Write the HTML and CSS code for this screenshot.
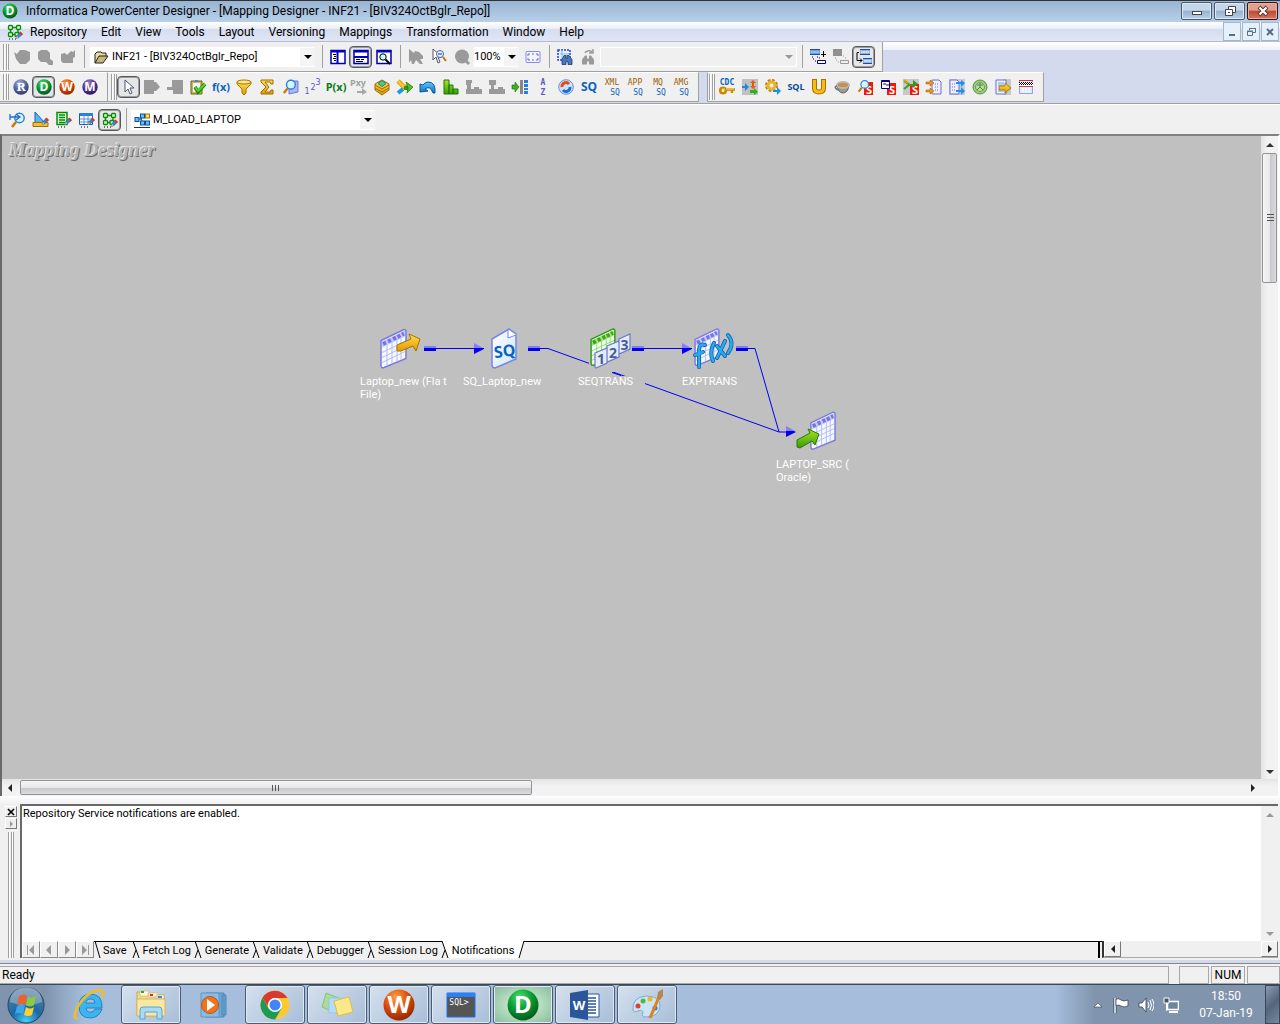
FILE: index.html
```html
<!DOCTYPE html>
<html lang="en">
<head>
<meta charset="utf-8">
<title>Informatica PowerCenter Designer</title>
<link rel="stylesheet" href="styles.css">
</head>
<body>
<svg class="defs" aria-hidden="true">
  <defs>
    <linearGradient id="gold" x1="0" y1="0" x2="0" y2="1"><stop offset="0" stop-color="#ffe14a"/><stop offset="1" stop-color="#e09a00"/></linearGradient>
    <linearGradient id="leaf" x1="0" y1="0" x2="0" y2="1"><stop offset="0" stop-color="#a6e81c"/><stop offset="1" stop-color="#3a9a08"/></linearGradient>
    <linearGradient id="sky" x1="0" y1="0" x2="0" y2="1"><stop offset="0" stop-color="#5cc8fa"/><stop offset="1" stop-color="#0a6fc4"/></linearGradient>
    <linearGradient id="paper" x1="0" y1="0" x2="1" y2="1"><stop offset="0" stop-color="#ffffff"/><stop offset="1" stop-color="#cfe6ff"/></linearGradient>
    <radialGradient id="ballR" cx=".4" cy=".25" r=".8"><stop offset="0" stop-color="#a4b0dc"/><stop offset=".6" stop-color="#4c5a94"/><stop offset="1" stop-color="#303c70"/></radialGradient>
    <radialGradient id="ballD" cx=".4" cy=".25" r=".8"><stop offset="0" stop-color="#4ade6a"/><stop offset=".5" stop-color="#0a9a34"/><stop offset="1" stop-color="#04521c"/></radialGradient>
    <radialGradient id="ballW" cx=".4" cy=".25" r=".8"><stop offset="0" stop-color="#ffa04a"/><stop offset=".5" stop-color="#dc4c08"/><stop offset="1" stop-color="#8a2400"/></radialGradient>
    <radialGradient id="ballM" cx=".4" cy=".25" r=".8"><stop offset="0" stop-color="#9a7cd0"/><stop offset=".6" stop-color="#4c2a8a"/><stop offset="1" stop-color="#2c1460"/></radialGradient>
    <radialGradient id="orb" cx=".5" cy=".95" r=".9"><stop offset="0" stop-color="#3fd2ff"/><stop offset=".45" stop-color="#1a6aa4"/><stop offset="1" stop-color="#5e7f9e"/></radialGradient>
    <symbol id="pencil" viewBox="0 0 8 8"><path d="M1 7l1-3 3-3 2 2-3 3z" fill="#2a8af0" stroke="#0a50b0" stroke-width=".6"/><path d="M4 1.500l1.500-1.500L8 2.500 6.500 4z" fill="#e83010"/><path d="M.5 7.500L2 4.500l1.500 1.500z" fill="#f8c040"/></symbol>
    <symbol id="boxes" viewBox="0 0 16 16"><g fill="#d4ffc0" stroke="#0a8a0a" stroke-width="1.300"><path d="M3.500 5v4M5 3.500h6M5 10.500h5M11 5v4"/><rect x="1.500" y="1.500" width="4" height="4" rx="1"/><rect x="9.500" y="1.500" width="4" height="4" rx="1"/><rect x="1.500" y="8.500" width="4" height="4" rx="1"/><rect x="8" y="8.500" width="4" height="4" rx="1"/></g><path d="M2 15h1M5 15h1M8 15h1" stroke="#000"/><use href="#pencil" x="8" y="7" width="8" height="9"/></symbol>
    <symbol id="lens" viewBox="0 0 16 16"><path d="M6 10l-4 5" stroke="#c87800" stroke-width="2.500"/><circle cx="9.500" cy="6" r="4.700" fill="#d8f2ff" stroke="#2a84d8" stroke-width="1.500"/><path d="M7 5a3 3 0 0 1 3-2" stroke="#fff" fill="none"/></symbol>
    <symbol id="grid" viewBox="0 0 28 40"><path d="M2 12L25 1q2 0 2 2v27L5 39q-3 1-3-2z" fill="#f4f8ff" stroke="#7a7adf" stroke-width="1.500"/><path d="M3 13L26 2v6L3 19z" fill="#c4c8ff"/><path d="M4 15.500l3-1.500M9 13l3-1.500M14 10.500l3-1.500M18.500 8.500l3-1.500M23 6l2-1" stroke="#7476e6" stroke-width="4"/><path d="M3 24l23-11M3 29l23-11M3 34l23-11M8 16v21M13 13v22M18 11v22M22 9v22" stroke="#b8bcf0"/></symbol>
    <symbol id="greengrid" viewBox="0 0 28 40"><path d="M2 12L25 1q2 0 2 2v27L5 39q-3 1-3-2z" fill="#f0fff0" stroke="#2a9a10" stroke-width="1.500"/><path d="M3 13L26 2v6L3 19z" fill="#a4e478"/><path d="M4 15.500l3-1.500M9 13l3-1.500M14 10.500l3-1.500M18.500 8.500l3-1.500M23 6l2-1" stroke="#3aa420" stroke-width="4"/><path d="M3 24l23-11M3 29l23-11M3 34l23-11M8 16v21M13 13v22M18 11v22M22 9v22" stroke="#8ad870"/></symbol>
  </defs>
</svg>

<header class="titlebar">
  <svg class="app" viewBox="0 0 16 16"><circle cx="8" cy="8" r="7.500" fill="url(#ballD)"/><text x="8" y="12" class="ball">D</text></svg>
  <h1>Informatica PowerCenter Designer - [Mapping Designer - INF21 - [BIV324OctBglr_Repo]]</h1>
  <button class="win" aria-label="Minimize"><svg viewBox="0 0 16 14"><rect x="3.500" y="7.500" width="9" height="3" fill="#fff" stroke="#445"/></svg></button>
  <button class="win" aria-label="Restore"><svg viewBox="0 0 16 14"><path d="M6.500 2.500h7v6h-7z" fill="#fff" stroke="#445"/><path d="M3.500 5.500h7v6h-7z" fill="#fff" stroke="#445"/><path d="M6 8h2v1H6z" fill="#445"/></svg></button>
  <button class="win close" aria-label="Close"><svg viewBox="0 0 16 14"><path d="M4 3l8 8M12 3l-8 8" stroke="#533" stroke-width="4"/><path d="M4.500 3.500l7 7M11.500 3.500l-7 7" stroke="#fff" stroke-width="2.200"/></svg></button>
</header>

<nav class="menubar">
  <svg class="ic" viewBox="0 0 16 16"><use href="#boxes"/></svg>
  <a href="#">Repository</a><a href="#">Edit</a><a href="#">View</a><a href="#">Tools</a><a href="#">Layout</a><a href="#">Versioning</a><a href="#">Mappings</a><a href="#">Transformation</a><a href="#">Window</a><a href="#">Help</a>
  <span class="spring"></span>
  <button class="mdi" aria-label="Minimize mapping"><svg viewBox="0 0 12 12"><path d="M3 9h6" stroke="#5a7088" stroke-width="2"/></svg></button>
  <button class="mdi" aria-label="Restore mapping"><svg viewBox="0 0 12 12"><path d="M4.500 4V2.500h6v4H8M4 2.500h7" stroke="#5a7088" fill="none"/><path d="M2.500 5.500h5v4h-5zM2 5h6" stroke="#5a7088" fill="none"/></svg></button>
  <button class="mdi" aria-label="Close mapping"><svg viewBox="0 0 12 12"><path d="M3 3l6 6M9 3l-6 6" stroke="#5a7088" stroke-width="2"/></svg></button>
</nav>

<div class="bars">
  <div class="bar main">
    <span class="grip"></span>
    <button class="tb" aria-label="Connect"><svg viewBox="0 0 16 16"><path d="M0 3l3 2 3-4h5l5 2v8l-4 4H6L2 10z" fill="#9a9a9a"/></svg></button>
    <button class="tb" aria-label="Disconnect"><svg viewBox="0 0 16 16"><path d="M1 3l3-2h6l3 3v6l3 2v4h-4l-3-3H4L1 10z" fill="#9a9a9a"/></svg></button>
    <button class="tb" aria-label="Save repository"><svg viewBox="0 0 16 16"><path d="M1 5l4-1 2 2 4-4 2 1 2-2v7l-2 1v5H3l-2-2z" fill="#9a9a9a"/></svg></button>
    <span class="sep"></span>
    <label class="combo repo" aria-label="Repository">
      <svg class="ic" viewBox="0 0 16 16"><path d="M2 14V5l2-2h4l1 1h4v3" fill="#e8dca0" stroke="#222"/><path d="M2 14l4-7h9l-5 7z" fill="#c8b878" stroke="#222"/></svg>
      <select><option>INF21 - [BIV324OctBglr_Repo]</option></select><i class="arrow"></i>
    </label>
    <span class="sep"></span>
    <button class="tb" aria-label="Navigator"><svg viewBox="0 0 16 16"><path d="M1 1.500h14v13H1z" fill="#fff" stroke="#0000a8" stroke-width="1.500"/><path d="M1 2.500h14M7.500 2v12" stroke="#0000c0" stroke-width="2"/><path d="M3 5.500h3M4 7.500h2M3 9.500h3M4 11.500h2" stroke="#000"/></svg></button>
    <button class="tb on" aria-label="Output"><svg viewBox="0 0 16 16"><path d="M1 1.500h14v13H1z" fill="#fff" stroke="#0000a8" stroke-width="1.500"/><path d="M1 2.500h14M1 8h14" stroke="#0000c0" stroke-width="2"/><path d="M3 10.500h4M8 10.500h3M3 12.500h7" stroke="#000"/></svg></button>
    <button class="tb" aria-label="Overview"><svg viewBox="0 0 16 16"><path d="M1 1.500h14v13H1z" fill="#fff" stroke="#0000a8" stroke-width="1.500"/><path d="M1 2.500h14" stroke="#0000c0" stroke-width="2"/><circle cx="7" cy="8" r="3.200" fill="#bff" stroke="#000"/><path d="M9.500 10.500L14 15" stroke="#000" stroke-width="2"/></svg></button>
    <span class="sep"></span>
    <button class="tb" aria-label="Zoom in"><svg viewBox="0 0 16 16"><path d="M1 0l5 4 1-2 4 1 4 4v3h-3l3 5h-3l-4-4-2 4H4l-1-4-2 3z" fill="#9a9a9a"/></svg></button>
    <button class="tb" aria-label="Zoom out"><svg viewBox="0 0 16 16"><path d="M2 0v11l3-3 2 6 2-1-2-5h4z" fill="#fff" stroke="#556"/><circle cx="9" cy="5" r="3.500" fill="#e4f4ff" stroke="#4868a8"/><path d="M7 5h4" stroke="#22a"/><path d="M12 8l3 4" stroke="#c87800" stroke-width="2"/></svg></button>
    <button class="tb" aria-label="Zoom area"><svg viewBox="0 0 16 16"><circle cx="8" cy="7.500" r="7" fill="#9a9a9a"/><path d="M11 11l4 4" stroke="#9a9a9a" stroke-width="3"/></svg></button>
    <label class="combo zoom" aria-label="Zoom"><select><option>100%</option></select><i class="arrow"></i></label>
    <button class="tb fit" aria-label="Fit"><svg viewBox="0 0 16 16"><rect x="1" y="2.500" width="14" height="11" rx="1" fill="#f4f4ff" stroke="#8a8adc"/><path d="M3 7V5h2M13 7V5h-2M3 9v2h2M13 9v2h-2M7 5h2M7 11h2" stroke="#6a6ad0" fill="none"/></svg></button>
    <span class="sep"></span>
    <button class="tb" aria-label="Find in workspace"><svg viewBox="0 0 16 16"><rect x="1" y="1" width="12" height="10" fill="#e8f2ff" stroke="#1a40e0" stroke-width="1.500" stroke-dasharray="2 1"/><path d="M3 5h9M5 1v9" stroke="#8ab0e8"/><path d="M5 15.500v-5l2-4h2v3h1v-3h2l3 4v5h-4v-3H9v3z" fill="#4a78b8" stroke="#223a70" stroke-width=".8"/></svg></button>
    <button class="tb" aria-label="Find next"><svg viewBox="0 0 16 16"><path d="M2 15.500v-5l3-4h2v3h2v-3h2l3 4v5h-5v-3H7v3z" fill="#9a9a9a"/><path d="M5 4a4 3 0 0 1 7-1M13 0v4H9" stroke="#9a9a9a" stroke-width="1.500" fill="none"/></svg></button>
    <label class="combo find off" aria-label="Find"><select disabled><option></option></select><i class="arrow"></i></label>
    <span class="sep"></span>
    <button class="tb" aria-label="Expand links"><svg viewBox="0 0 16 16"><path d="M0 0h10v6H0z" fill="#6a9ae8"/><path d="M0 .5h10M0 5.500h10" stroke="#244a9a"/><path d="M1 3h8" stroke="#c8dcff"/><path d="M13.500 2v6M11 5.500h5" stroke="#000"/><path d="M2 8h1M3 10h1M5 12h1M7 8h1M9 9h1" stroke="#000"/><path d="M7.500 11.500h8v3h-8z" fill="#fff" stroke="#00008a"/></svg></button>
    <button class="tb" aria-label="Collapse links"><svg viewBox="0 0 16 16"><path d="M0 0h9v7H0z" fill="#909090"/><path d="M2 9h1M3 11h1M5 13h1M10 7h1M12 9h1" stroke="#999"/><path d="M7.500 11.500h8v3h-8z" fill="#eee" stroke="#999"/></svg></button>
    <button class="tb on" aria-label="Link columns"><svg viewBox="0 0 16 16"><path d="M4 0h10v6H4zM7 9h9v6H7z" fill="#8ab4f0"/><path d="M4 .5h10M4 5.500h10M7 9.500h9M7 14.500h9" stroke="#2a4a98"/><path d="M5 3h8M8 12h7" stroke="#fff"/><path d="M3 3.500H1v8h5M4 9.500l2 2-2 2" stroke="#000" fill="none"/></svg></button>
  </div>

  <div class="row">
    <div class="bar">
      <span class="grip"></span>
      <button class="tb" aria-label="Repository Manager"><svg viewBox="0 0 16 16"><circle cx="8" cy="8" r="7.700" fill="url(#ballR)"/><text x="8" y="12" class="ball slab">R</text></svg></button>
      <button class="tb on" aria-label="Designer"><svg viewBox="0 0 16 16"><circle cx="8" cy="8" r="7.700" fill="url(#ballD)"/><text x="8" y="12" class="ball">D</text></svg></button>
      <button class="tb" aria-label="Workflow Manager"><svg viewBox="0 0 16 16"><circle cx="8" cy="8" r="7.700" fill="url(#ballW)"/><text x="8" y="12" class="ball">W</text></svg></button>
      <button class="tb" aria-label="Workflow Monitor"><svg viewBox="0 0 16 16"><circle cx="8" cy="8" r="7.700" fill="url(#ballM)"/><text x="8" y="12" class="ball">M</text></svg></button>
    </div>
    <div class="bar trans">
      <span class="grip"></span>
      <button class="tb on" aria-label="Pointer"><svg viewBox="0 0 16 16"><path d="M4 1v12l3-3 2 5 2-1-2-5h4z" fill="#fff" stroke="#4a5a7a"/></svg></button>
      <button class="tb" aria-label="Input"><svg viewBox="0 0 16 16"><path d="M0 1h10v2h2l4 5-4 4h-2v3H0z" fill="#9a9a9a"/></svg></button>
      <button class="tb" aria-label="Output"><svg viewBox="0 0 16 16"><path d="M5 1h11v14H6v-4H0V8h5z" fill="#9a9a9a"/></svg></button>
      <button class="tb" aria-label="Validate"><svg viewBox="0 0 16 16"><path d="M1 2h11v13H1z" fill="#d8b050" stroke="#5a6a20"/><path d="M3 4h7v9H3z" fill="#eef4ff"/><path d="M5 1h3v2H5z" fill="#4a80d0"/><path d="M5 8l3 5 7-8" stroke="#1a8a10" stroke-width="3.500" fill="none"/><path d="M5 8l3 4 7-7" stroke="#5ad820" stroke-width="1.800" fill="none"/></svg></button>
      <button class="tb" aria-label="Expression"><svg viewBox="0 0 16 16"><text x="8" y="12" class="g blue sm">f(x)</text></svg></button>
      <button class="tb" aria-label="Filter"><svg viewBox="0 0 16 16"><path d="M1 3v2l5 5v4l2 2 2-2v-4l5-5V3z" fill="url(#gold)" stroke="#a87400"/><ellipse cx="8" cy="3" rx="7" ry="2" fill="#ffe890" stroke="#a87400"/></svg></button>
      <button class="tb" aria-label="Aggregator"><svg viewBox="0 0 16 16"><path d="M2 1h12v4h-2l-1-2H6l4 5-4 5h5l1-2h2v4H2v-2l5-5-5-5z" fill="url(#gold)" stroke="#a06c00"/></svg></button>
      <button class="tb" aria-label="Lookup"><svg viewBox="0 0 16 16"><path d="M7 2l9 0v11l-9 2z" fill="#a8b8f4" stroke="#6a7ad0"/><use href="#lens" width="15" height="15"/></svg></button>
      <button class="tb" aria-label="Sequence"><svg viewBox="0 0 16 16"><g class="tiny violet"><text x="2" y="15">1</text><text x="8" y="11">2</text><text x="13" y="6">3</text></g></svg></button>
      <button class="tb" aria-label="Stored procedure"><svg viewBox="0 0 16 16"><text x="8" y="12" class="g green sm">P(x)</text></svg></button>
      <button class="tb" aria-label="External procedure"><svg viewBox="0 0 16 16"><text x="7" y="7" class="g gray xs">Pxy</text><path d="M6 12h5V9l5 4-5 3v-2H6z" fill="#a8a8a8"/></svg></button>
      <button class="tb" aria-label="Normalizer"><svg viewBox="0 0 16 16"><path d="M1 5l7-4 7 4v6l-7 5-7-5z" fill="url(#gold)" stroke="#9a6c00"/><path d="M4 4.500l4-3 4 3-4 3z" fill="#5ad048" stroke="#1a80c0"/><path d="M1 6l7 4 7-4M1 9l7 4 7-4" stroke="#a06c00" fill="none"/></svg></button>
      <button class="tb" aria-label="Joiner"><svg viewBox="0 0 16 16"><path d="M1 2l6 6h5" stroke="#c88a00" stroke-width="4.500" fill="none"/><path d="M1 2l6 6h5" stroke="#ffc820" stroke-width="3" fill="none"/><path d="M1 14l5-4" stroke="#1a9ae0" stroke-width="4"/><path d="M7 9h4" stroke="#2a9a10" stroke-width="4"/><path d="M9 3l7 5-6 6 1-5z" fill="#50c020" stroke="#1a7010" stroke-width=".7"/></svg></button>
      <button class="tb" aria-label="Update strategy"><svg viewBox="0 0 16 16"><path d="M0 5v8l8-1-3-2q5-4 8 4h2Q16 3 8 3 5 3 3 6z" fill="url(#sky)" stroke="#0a58a0"/></svg></button>
      <button class="tb" aria-label="Rank"><svg viewBox="0 0 16 16"><path d="M1 1h5v14H1zM6 6h4v9H6zM10 10h5v5h-5z" fill="url(#leaf)" stroke="#1a7a08"/></svg></button>
      <button class="tb" aria-label="Source qualifier"><svg viewBox="0 0 16 16"><path d="M0 1h6v3H5v6h3V8h5v2h3v5H0v-5h1V6H0z" fill="#9a9a9a"/></svg></button>
      <button class="tb" aria-label="Mapplet"><svg viewBox="0 0 16 16"><path d="M0 1h7v5H5v4h4V8h5v2h2v5H0v-5h2V6H0z" fill="#9a9a9a"/></svg></button>
      <button class="tb" aria-label="Router"><svg viewBox="0 0 16 16"><path d="M0 6h3V3l4 5-4 5v-3H0z" fill="#3cb020" stroke="#1a7010" stroke-width=".6"/><path d="M8 1h3v14H8z" fill="#888"/><path d="M12 1h4v3h-4zM12 5h4v3h-4zM12 9h4v2h-4zM12 12h4v3h-4z" fill="#2a80d8"/></svg></button>
      <button class="tb" aria-label="Sorter"><svg viewBox="0 0 16 16"><g class="violet"><text x="8" y="6" class="pix heavy">A</text><text x="8" y="16" class="pix heavy">Z</text></g></svg></button>
      <button class="tb" aria-label="Transaction control"><svg viewBox="0 0 16 16"><circle cx="8" cy="8" r="7.300" fill="#cfe2fc" stroke="#6a90d8"/><path d="M4 8a4 4 0 0 1 7-3" stroke="#e84a10" stroke-width="3" fill="none"/><path d="M12 8a4 4 0 0 1-7 3" stroke="#1a70d8" stroke-width="3" fill="none"/></svg></button>
      <button class="tb" aria-label="SQ"><svg viewBox="0 0 16 16"><text x="8" y="12" class="g blue cond">SQ</text></svg></button>
      <button class="tb" aria-label="XML SQ"><svg viewBox="0 0 16 16"><text x="8" y="6" class="pix brown">XML</text><text x="11" y="16" class="pix blue">SQ</text></svg></button>
      <button class="tb" aria-label="APP SQ"><svg viewBox="0 0 16 16"><text x="8" y="6" class="pix brown">APP</text><text x="11" y="16" class="pix blue">SQ</text></svg></button>
      <button class="tb" aria-label="MQ SQ"><svg viewBox="0 0 16 16"><text x="8" y="6" class="pix brown">MQ</text><text x="11" y="16" class="pix blue">SQ</text></svg></button>
      <button class="tb" aria-label="AMG SQ"><svg viewBox="0 0 16 16"><text x="8" y="6" class="pix brown">AMG</text><text x="11" y="16" class="pix blue">SQ</text></svg></button>
    </div>
    <div class="bar adv">
      <span class="grip"></span>
      <button class="tb" aria-label="CDC key"><svg viewBox="0 0 16 16"><text x="8" y="6" class="pix blue heavy">CDC</text><circle cx="4" cy="11.500" r="2.800" fill="none" stroke="#c88a00" stroke-width="2.600"/><path d="M7 10.500h9M13 11v3" stroke="#c88a00" stroke-width="2.400"/><path d="M3 10h3M7 10h8" stroke="#ffd850"/></svg></button>
      <button class="tb" aria-label="Custom"><svg viewBox="0 0 16 16"><rect width="16" height="16" fill="#c0c0c0"/><path d="M0 7h3V4l4 4-4 4V9H0z" fill="#1a8ae0"/><path d="M11 1l3 3h-2v3h2l-3 3-3-3h2V4H8z" fill="#e85a10"/><path d="M8 11h4V9l4 4-4 3v-2H8z" fill="#2ab020"/></svg></button>
      <button class="tb" aria-label="Java gear"><svg viewBox="0 0 16 16"><circle cx="6.500" cy="6.500" r="5" fill="none" stroke="#c08000" stroke-width="3" stroke-dasharray="2.500 1.400"/><circle cx="6.500" cy="6.500" r="3.500" fill="none" stroke="#e8b430" stroke-width="3"/><path d="M8 11h4V8l4 4-4 4v-3H8z" fill="#1a90f0"/></svg></button>
      <button class="tb" aria-label="SQL"><svg viewBox="0 0 16 16"><text x="8" y="11" class="g navy xs">SQL</text></svg></button>
      <button class="tb" aria-label="Union"><svg viewBox="0 0 16 16"><path d="M3.500 0v9q0 4 4.500 4t4.500-4V0" fill="none" stroke="#a87400" stroke-width="5"/><path d="M3.500 1v8q0 4 4.500 4t4.500-4V1" fill="none" stroke="#f8bc10" stroke-width="3"/></svg></button>
      <button class="tb" aria-label="Java"><svg viewBox="0 0 16 16"><path d="M3 6q1 8 6 8t6-8z" fill="#989898" stroke="#666"/><ellipse cx="9" cy="6" rx="6" ry="3" fill="#c89040" stroke="#b8b8b8" stroke-width="1.800"/><path d="M3 7q-4 1 1 4" fill="none" stroke="#777" stroke-width="1.500"/></svg></button>
      <button class="tb" aria-label="Lookup S"><svg viewBox="0 0 16 16"><rect x="7" y="3" width="9" height="13" fill="#f01808"/><text x="12" y="15" class="g white sm">S</text><use href="#lens" width="13" height="14"/></svg></button>
      <button class="tb" aria-label="Table S"><svg viewBox="0 0 16 16"><rect x="7" y="4" width="9" height="12" fill="#f01808"/><text x="12" y="15" class="g white sm">S</text><path d="M1.500 1.500h8v8h-8z" fill="#fff" stroke="#00008a"/><path d="M1 2.500h9M3 5h3M6 6h4" stroke="#00008a"/></svg></button>
      <button class="tb" aria-label="Joiner S"><svg viewBox="0 0 16 16"><rect width="16" height="16" fill="#c8c8c8"/><rect x="7" y="5" width="9" height="11" fill="#f01808"/><text x="12" y="15" class="g white sm">S</text><path d="M1 2l6 4h5M1 10l5-4" stroke="#3aa020" stroke-width="2" fill="none"/><path d="M10 1l5 4-5 4z" fill="#2a9a20"/><path d="M1 1l4 3" stroke="#e0a800" stroke-width="2"/></svg></button>
      <button class="tb" aria-label="XML parser"><svg viewBox="0 0 16 16"><path d="M6 1h7l2 2v12H6z" fill="#eef0ff" stroke="#6a70d0"/><path d="M9 5h4M9 8h4M9 11h4" stroke="#6a70d0" stroke-dasharray="1 1"/><path d="M0 3h4V1l4 3-4 3V5H0zM0 11h4V9l4 3-4 3v-2H0z" fill="#f09a10" stroke="#a04800" stroke-width=".5"/></svg></button>
      <button class="tb" aria-label="XML generator"><svg viewBox="0 0 16 16"><rect width="16" height="16" fill="#c8ccd8"/><path d="M1 1h7l2 2v12H1z" fill="#eef0ff" stroke="#6a70d0"/><path d="M3 5h4M3 8h4M3 11h4" stroke="#6a70d0" stroke-dasharray="1 1"/><path d="M7 3h5V1l4 3-4 4V5H7zM7 11h5V8l4 4-4 4v-3H7z" fill="#1a90f0"/></svg></button>
      <button class="tb" aria-label="HTTP"><svg viewBox="0 0 16 16"><circle cx="8" cy="8" r="7" fill="#a0cc80" stroke="#5a9040"/><circle cx="8" cy="8" r="4.500" fill="#b8dca0" stroke="#6aa058"/><path d="M8 4v5M5 11l3-3 3 3M5 6h6" stroke="#4a8a38" fill="none"/></svg></button>
      <button class="tb" aria-label="Unstructured data"><svg viewBox="0 0 16 16"><rect x="8" width="8" height="16" fill="#c8c8c8"/><path d="M1 1h10v14H1z" fill="#eef4ff" stroke="#6a70c8"/><path d="M3 4h6M3 6h6M3 12h6" stroke="#7a9ad8"/><path d="M4 7h6V4l6 5-6 5v-3H4z" fill="url(#gold)" stroke="#9a6800" stroke-width=".8"/></svg></button>
      <button class="tb" aria-label="Data masking"><svg viewBox="0 0 16 16"><path d="M1.500 1.500h13v13h-13z" fill="#dce8ff" stroke="#9aa0c8"/><path d="M1 1.500h14" stroke="#d03030"/><path d="M1 5h14" stroke="#fff" stroke-width="4"/><path d="M1 3.500h14M1 5.500h14" stroke="#000" stroke-dasharray="1 1"/><path d="M2 4.500h13" stroke="#000" stroke-dasharray="1 1"/><path d="M1 7.500h14" stroke="#d04040"/><path d="M5 9v5M8 9v5M11 9v5" stroke="#fff"/></svg></button>
    </div>
  </div>

  <div class="bar wide">
    <button class="tb" aria-label="Source Analyzer"><svg viewBox="0 0 16 16"><use href="#lens"/><path d="M0 2v6M0 5h9M6 2l4 3-4 3" stroke="#1a70d0" stroke-width="1.300" fill="none"/></svg></button>
    <button class="tb" aria-label="Target Designer"><svg viewBox="0 0 16 16"><path d="M2 0v11h10z" fill="#5ab4f4" stroke="#1a60b0"/><path d="M0 10.500h15v4H0z" fill="#f0c030" stroke="#a07000"/><use href="#pencil" x="8" y="5" width="8" height="9"/></svg></button>
    <button class="tb" aria-label="Transformation Developer"><svg viewBox="0 0 16 16"><path d="M1 .5h10v12H1z" fill="#dcffd0" stroke="#0a8a0a" stroke-width="1.500"/><path d="M3 3h6M3 5.500h6M3 8h6M3 10.500h6" stroke="#0a8a0a" stroke-width="1.500"/><path d="M2 15h1M5 15h1M8 15h1" stroke="#000"/><use href="#pencil" x="8" y="5" width="8" height="9"/></svg></button>
    <button class="tb" aria-label="Mapplet Designer"><svg viewBox="0 0 16 16"><path d="M.5 1.500h13v11H.5z" fill="#fff" stroke="#1a5ac0"/><path d="M1 2.500h13" stroke="#2a80e0" stroke-width="3"/><path d="M1 7h12M1 10h12M5 4v8M9 4v8" stroke="#5a90d8"/><path d="M2 15h1M5 15h1M8 15h1" stroke="#000"/><use href="#pencil" x="8" y="5" width="8" height="9"/></svg></button>
    <button class="tb on" aria-label="Mapping Designer"><svg viewBox="0 0 16 16"><use href="#boxes"/></svg></button>
    <span class="sep"></span>
    <label class="combo mapping" aria-label="Mapping">
      <svg class="ic" viewBox="0 0 16 16"><path d="M3 7h4l3-4M7 7l3 5M0 15.500h16" stroke="#234" fill="none"/><g stroke="#0a50a0" fill="#60c0ff"><rect x="1" y="5.500" width="4" height="4"/><rect x="6.500" y="2" width="4" height="4"/><rect x="6.500" y="9" width="4" height="4"/><rect x="11.500" y="9" width="4" height="4"/></g><rect x="11.500" y="2" width="4" height="4" fill="#ffe060" stroke="#a07800"/></svg>
      <select><option>M_LOAD_LAPTOP</option></select><i class="arrow"></i>
    </label>
  </div>
</div>

<main class="workspace">
  <section class="canvas">
    <h2>Mapping Designer</h2>
    <svg class="wires" width="900" height="500" viewBox="0 0 900 500">
      <g stroke="#0000f0" fill="none">
        <path d="M422 212.500h60M526 212.500h20l231 83.500h12M630 212.500h60M734 212.500h19l24 83.500"/>
        <path d="M422 211h12M526 211h12M630 211h12M734 211h12" stroke="#8080f8" stroke-width="2"/>
        <path d="M422 213.500h12M526 213.500h12M630 213.500h12M734 213.500h12" stroke-width="3"/>
      </g>
      <g fill="#0000f0"><path d="M472 208l10 5-10 5zM680 208l10 5-10 5zM784 291l10 5-10 5z"/></g>
      <g fill="#8080f8"><path d="M472 207l9 5h-9zM680 207l9 5h-9zM784 290l9 5h-9z"/></g>
      <path d="M587 190h42v46h-19v4h33v12h-65v-24h9z" fill="#c0c0c0"/>
      <path d="M610 236.500l9 3" stroke="#0000f0"/>
    </svg>
    <figure class="node n1"><svg viewBox="0 0 44 42"><use href="#grid" y="1" width="28" height="41"/><path d="M18 18l14-6-2-5 11 5-4 12-3-5-12 5h-4z" fill="url(#gold)" stroke="#a87400"/></svg><figcaption>Laptop_new (Fla t<br>File)</figcaption></figure>
    <figure class="node n2"><svg viewBox="0 0 44 42"><path d="M10 12L27 2l7 5v25L13 41q-3 0-3-3z" fill="url(#paper)" stroke="#7a86e0" stroke-width="1.500"/><path d="M26 3v8l8-3" fill="#fff" stroke="#7a86e0"/><text x="23" y="30" class="g blue sq" transform="rotate(-8 22 26)">SQ</text></svg><figcaption>SQ_Laptop_new</figcaption></figure>
    <figure class="node n3"><svg viewBox="0 0 44 42"><use href="#greengrid" x="1" y="1" width="27" height="38"/><g fill="#e4ecff" stroke="#6a78c8" stroke-width="1.200"><path d="M7 26l12-5v15L8 41q-1 0-1-1zM19 19l12-5v16l-12 5zM31 12l11-5v15l-11 5z"/></g><g class="g slate num"><text x="13" y="37">1</text><text x="25" y="31">2</text><text x="36.500" y="23">3</text></g></svg><figcaption>SEQTRANS</figcaption></figure>
    <figure class="node n4"><svg viewBox="0 0 44 42"><use href="#grid" x="2" y="1" width="27" height="38"/><g fill="none" stroke-linecap="round"><path d="M14 18q-6-2-6 5v17M4 28l8-3M23 16q-5 9-1 18M26 19l8 10M34 14l-8 17M37 8q7 8 0 18" stroke="#0a60a8" stroke-width="4"/><path d="M14 18q-6-2-6 5v17M4 28l8-3M23 16q-5 9-1 18M26 19l8 10M34 14l-8 17M37 8q7 8 0 18" stroke="#2aa8f0" stroke-width="2.500"/></g></svg><figcaption>EXPTRANS</figcaption></figure>
    <figure class="node n5"><svg viewBox="0 0 44 42"><use href="#grid" x="14" width="27" height="41"/><path d="M2 30l13-7-2-4 11 5-4 11-3-4-12 7-3-1z" fill="url(#leaf)" stroke="#2a7a08"/></svg><figcaption>LAPTOP_SRC (<br>Oracle)</figcaption></figure>
  </section>
  <div class="vscroll"><i class="tri up"></i><span class="vthumb"><svg viewBox="0 0 8 10"><path d="M1 1.500h7M1 4.500h7M1 7.500h7" stroke="#555"/></svg></span><span class="spring"></span><i class="tri down"></i></div>
  <div class="hscroll"><i class="tri left"></i><span class="hthumb"><svg viewBox="0 0 10 8"><path d="M1.500 1v6M4.500 1v6M7.500 1v6" stroke="#555"/></svg></span><span class="spring"></span><i class="tri right"></i></div>
</main>

<section class="output">
  <div class="dock">
    <button class="mini" aria-label="Close output"><svg viewBox="0 0 8 8"><path d="M1 1l6 6M7 1L1 7" stroke="#000" stroke-width="1.600"/></svg></button>
    <button class="mini" aria-label="Expand output"><svg viewBox="0 0 8 8"><path d="M3 1l3 3-3 3z" fill="#999"/></svg></button>
    <span class="grip"></span>
  </div>
  <div class="pane">
    <div class="log"><p>Repository Service notifications are enabled.</p><div class="vscroll dim"><i class="tri up"></i><span class="spring"></span><i class="tri down"></i></div></div>
    <div class="tabs">
      <button class="step" aria-label="First"><svg viewBox="0 0 10 10"><path d="M1 0h1v10H1zM8 0v10L3 5z" fill="#999"/></svg></button><button class="step" aria-label="Previous"><svg viewBox="0 0 10 10"><path d="M7 0v10L2 5z" fill="#999"/></svg></button><button class="step" aria-label="Next"><svg viewBox="0 0 10 10"><path d="M3 0v10l5-5z" fill="#999"/></svg></button><button class="step" aria-label="Last"><svg viewBox="0 0 10 10"><path d="M2 0v10l5-5zM8 0h1v10H8z" fill="#999"/></svg></button>
      <svg class="cut" viewBox="0 0 8 17"><path d="M1 0l5 17" stroke="#000" fill="none"/></svg>
      <button class="tab first">Save</button><svg class="cut" viewBox="0 0 8 17"><path d="M1 0l6 17M4 9L1 17" stroke="#000"/></svg>
      <button class="tab">Fetch Log</button><svg class="cut" viewBox="0 0 8 17"><path d="M1 0l6 17M4 9L1 17" stroke="#000"/></svg>
      <button class="tab">Generate</button><svg class="cut" viewBox="0 0 8 17"><path d="M1 0l6 17M4 9L1 17" stroke="#000"/></svg>
      <button class="tab">Validate</button><svg class="cut" viewBox="0 0 8 17"><path d="M1 0l6 17M4 9L1 17" stroke="#000"/></svg>
      <button class="tab">Debugger</button><svg class="cut" viewBox="0 0 8 17"><path d="M1 0l6 17M4 9L1 17" stroke="#000"/></svg>
      <button class="tab">Session Log</button><svg class="cut" viewBox="0 0 8 17"><path d="M1 0h7v17H7z" fill="#fff"/><path d="M1 0l6 17M4 9L1 17" stroke="#000"/></svg>
      <button class="tab sel">Notifications</button><svg class="cut" viewBox="0 0 8 17"><path d="M0 0h7L2 17H0z" fill="#fff"/><path d="M7 0L2 17" stroke="#000"/></svg>
      <span class="rest"></span>
      <span class="hbar"><button class="nudge" aria-label="Scroll left"><i class="tri left"></i></button><span class="spring"></span><button class="nudge" aria-label="Scroll right"><i class="tri right"></i></button></span>
    </div>
  </div>
</section>

<div class="status"><span class="cell ready">Ready</span><span class="cell sm"></span><span class="cell num-lock">NUM</span><span class="cell end"></span></div>

<footer class="taskbar">
  <button class="start" aria-label="Start"><svg viewBox="0 0 38 38"><circle cx="19" cy="19" r="18" fill="url(#orb)" stroke="#24435f"/><path d="M3 16a16 16 0 0 1 32 0q-16 7-32 0z" fill="#fff" opacity=".3"/><path d="M12 10q5-3 8 0l-2 9q-4-3-8 0z" fill="#f0602a"/><path d="M21 11q4 2 8-1l-2 9q-4 3-8 0z" fill="#8ccc3a"/><path d="M10 20q4-3 8 0l-2 8q-4-2-8 0z" fill="#3fa4ee"/><path d="M19 21q4 3 8 0l-2 8q-4 2-8 0z" fill="#ffcf2e"/></svg></button>
  <button class="task plain" aria-label="Internet Explorer"><svg viewBox="0 0 34 34"><path d="M30 21q-3 9-12 9-11 0-11-12 0-11 11-12 13 0 12 14H14q1 5 5 4 3 0 4-3zM14 15h9q0-4-4-4-5 0-5 4z" fill="#3cb4f0" stroke="#1678b8" stroke-width=".8" fill-rule="evenodd"/><path d="M6 30Q0 32 5 20 15 3 28 2q5 1 2 8" fill="none" stroke="#f4bc20" stroke-width="2.500"/></svg></button>
  <button class="task" aria-label="Windows Explorer"><svg viewBox="0 0 34 34"><path d="M3 4h9l2 3h16v21H3z" fill="#f0d888" stroke="#c8a850"/><path d="M6 3h9v5H6zM14 5h10v4H14zM22 7h8v4h-8z" fill="#fff8d8" stroke="#d0b870" stroke-width=".7"/><path d="M7 3h3v2H7z" fill="#2aa840"/><path d="M16 6h3v2h-3z" fill="#d83020"/><path d="M24 8h4v2h-4z" fill="#3888e0"/><path d="M3 11h28v17H3z" fill="#f8e8a4" stroke="#d4b860"/><path d="M6 31v-9q0-3 3-3h16q3 0 3 3v9h-5v-7H11v7z" fill="#a8dcf4" stroke="#5aa4cc"/></svg></button>
  <button class="task plain" aria-label="Media Player"><svg viewBox="0 0 34 34"><path d="M10 5h18v24H10zM26 7h4v20h-4z" fill="#6aa8d4" stroke="#4a88b8"/><path d="M5 5h18v24H5z" fill="#88bce4" stroke="#5a98c8"/><circle cx="14" cy="17" r="8.500" fill="#f07420" stroke="#c85008"/><path d="M11 11v12l8-6z" fill="#fff"/></svg></button>
  <button class="task" aria-label="Chrome"><svg viewBox="0 0 34 34"><circle cx="17" cy="17" r="14.500" fill="#fcc934"/><path d="M17 17l6.500 3.600L17 31.500A14.500 14.500 0 0 1 4.500 9.700l6.300 11z" fill="#1f9a55"/><path d="M4.500 9.700A14.500 14.500 0 0 1 29.500 10H17q-6 0-7.500 8z" fill="#d83a30"/><circle cx="17" cy="17" r="7" fill="#fff"/><circle cx="17" cy="17" r="5.500" fill="#4285f4"/></svg></button>
  <button class="task" aria-label="Sticky Notes"><svg viewBox="0 0 34 34"><path d="M6 5l13 5-5 14-12-5z" fill="#a8dc98" stroke="#88c478"/><path d="M9 10h15v15H9z" fill="#b4dcf8" stroke="#98c4e8"/><path d="M14 13l15-4 4 15-15 4z" fill="#fce888" stroke="#d8c050"/></svg></button>
  <button class="task" aria-label="Workflow Manager window"><svg viewBox="0 0 34 34"><circle cx="17" cy="17" r="15.500" fill="url(#ballW)"/><text x="17" y="25" class="ball big">W</text></svg></button>
  <button class="task" aria-label="SQL Plus"><svg viewBox="0 0 34 34"><path d="M3 5h28v24H3z" fill="#555" stroke="#1a70f0"/><path d="M3 5h28v4H3z" fill="#2a80f8"/><text x="15" y="17" class="pix white">SQL&gt;</text></svg></button>
  <button class="task green-on" aria-label="Designer window"><svg viewBox="0 0 34 34"><circle cx="17" cy="17" r="15.500" fill="url(#ballD)"/><text x="17" y="25" class="ball big">D</text></svg></button>
  <button class="task" aria-label="Word"><svg viewBox="0 0 34 34"><path d="M19 6h12v23H19z" fill="#fff" stroke="#2b579a"/><path d="M20 10h8M20 13h8M20 16h8M20 19h8M20 22h8M20 25h8" stroke="#2b579a" stroke-width="1.500"/><path d="M2 5l18-3v30L2 29z" fill="#2b579a"/><text x="11" y="22" class="g white w">W</text></svg></button>
  <button class="task" aria-label="Paint"><svg viewBox="0 0 34 34"><path d="M3 22Q2 9 16 8q14 0 14 10-1 11-14 11-5 0-3-4 0-4-5-2-4 2-5-1z" fill="#cce4f4" stroke="#7aacd0"/><circle cx="8" cy="18" r="2.500" fill="#e04030"/><circle cx="13" cy="13" r="2.500" fill="#50b840"/><circle cx="20" cy="11" r="2.500" fill="#f0b820"/><circle cx="25" cy="20" r="2.500" fill="#3878d8"/><path d="M20 30L29 9" stroke="#e08020" stroke-width="3"/><path d="M27 10l1-6 5-3v7l-3 4z" fill="#b08850"/></svg></button>
  <span class="spring"></span>
  <span class="tray">
    <svg viewBox="0 0 12 18"><path d="M6 7l4 4H2z" fill="#fff" stroke="#345" stroke-width=".6"/></svg>
    <svg viewBox="0 0 16 18"><path d="M2 2v15" stroke="#345" stroke-width="3"/><path d="M2 2v15" stroke="#fff" stroke-width="1.500"/><path d="M3 3q3-1 5 1t7 0v6q-4 2-7 0t-5 0z" fill="#fff" stroke="#345" stroke-width=".8"/></svg>
    <svg viewBox="0 0 16 18"><path d="M1 7h3l4-5v14l-4-5H1z" fill="#fff" stroke="#345" stroke-width=".8"/><path d="M10 6q2 3 0 6M12 4q3 5 0 10M14 3q4 6 0 12" stroke="#fff" fill="none"/></svg>
    <svg viewBox="0 0 16 18"><path d="M4.500 5.500h11v8h-11z" fill="#6c86a2" stroke="#fff" stroke-width="1.500"/><path d="M6 16h9" stroke="#fff" stroke-width="2"/><path d="M1 2h5v5H1zM3.500 7v8" fill="#456" stroke="#fff"/></svg>
  </span>
  <time class="clock">18:50<br>07-Jan-19</time>
  <button class="peek" aria-label="Show desktop"></button>
</footer>
</body>
</html>
```
FILE: styles.css
```css
* { box-sizing: border-box; }
html, body { margin: 0; min-height: 100%; }
body {
  display: flex; flex-direction: column; min-height: 100vh;
  background: #f0f0f0; color: #000;
  font: 11px/13px Roboto, "Liberation Sans", sans-serif;
}
h1, h2, p, figure { margin: 0; font-weight: normal; }
button { border: 0; padding: 0; background: none; font: inherit; color: inherit; }
button svg { display: block; }
.defs { position: absolute; width: 0; height: 0; }
.spring { flex: 1; }
.ic { width: 16px; height: 16px; flex: none; }

.titlebar {
  display: flex; align-items: flex-start; gap: 2px; height: 22px; padding: 0 2px 0 2px;
  border-top: 1px solid #333; background: linear-gradient(#98b4d2, #b8d0ea);
}
.titlebar .app { width: 16px; height: 16px; margin: 2px 6px 0 0; overflow: visible; }
.titlebar h1 { flex: 1; font: 12px/20px Roboto, "Open Sans", sans-serif; white-space: nowrap; overflow: hidden; }
.win { width: 31px; height: 18px; margin-top: 1px; border: 1px solid #4a5c70; border-radius: 2px; background: linear-gradient(#c4d6ea 45%, #98b2cc 50%, #b8d0e8); box-shadow: inset 0 0 0 1px #dce8f4; }
.win svg { width: 16px; height: 14px; margin: auto; }
.win.close { background: linear-gradient(#e0a090 45%, #c04830 50%, #d07860); border-color: #401010; box-shadow: inset 0 0 0 1px #e8b0a4; }

.menubar {
  display: flex; align-items: center; height: 20px; padding: 0 1px 0 7px;
  background: linear-gradient(#fff, #e8edf7 35%, #d5dcee 36%, #e0e6f6); border-bottom: 1px solid #b6bccc;
  font: 12px/18px Roboto, "Open Sans", sans-serif;
}
.menubar a { color: #000; text-decoration: none; padding: 0 7px; }
.mdi { width: 18px; height: 19px; margin-left: 1px; border: 1px solid #a4b8cc; background: #e4f0fa; }
.mdi svg { width: 12px; height: 12px; margin: auto; }

.bars { background: linear-gradient(#fff, #eef1f9 8px, #d3daed 8px); }
.bar { display: flex; align-items: center; height: 30px; padding-left: 3px; background: #f0f0f0; border: solid #a0a0a0; border-width: 0 1px 1px 0; }
.main { width: 883px; }
.main .grip { margin-right: 1px; }
.row { display: flex; border-bottom: 1px solid #a0a0a0; height: 32px; }
.row .bar { border-top: 1px solid #fff; padding-right: 6px; }
.row .adv { margin-left: 8px; padding-left: 1px; border-left: 1px solid #a0a0a0; }
.wide { padding-left: 6px; border-right: 0; border-bottom: 0; border-top: 1px solid #fff; }
.grip { flex: none; width: 6px; height: 26px; border: solid #a0a0a0; border-width: 0 1px; background: linear-gradient(90deg, #fff 1px, #f0f0f0 1px 2px, #a0a0a0 2px 3px, #fff 3px); }
.tb { flex: none; width: 23px; height: 22px; display: grid; place-items: center; }
.tb svg { width: 16px; height: 16px; overflow: visible; }
.on { border: 1px solid #55585c; border-radius: 4px; background: #e4e6e8; box-shadow: inset 0 0 0 1px #9c9ea2; }
.sep { flex: none; width: 1px; height: 23px; margin: 0 3px 0 5px; background: #a0a0a0; }
.combo { display: flex; align-items: center; height: 20px; background: #fff; }
.combo select { flex: 1; min-width: 0; width: 100%; height: 18px; padding: 0 3px; border: 0; background: none; appearance: none; font: 11px/16px Roboto, "Liberation Sans", sans-serif; color: #000; opacity: 1; }
.repo { width: 225px; padding-left: 3px; margin: 0 2px; }
.zoom { width: 45px; margin: 0 2px 0 1px; }
.zoom select { padding: 0; }
.find { width: 197px; border: 1px solid #fff; margin-left: 1px; }
.mapping { width: 244px; padding-left: 3px; margin-left: 1px; }
.off { background: #f0f0f0; }
.arrow { flex: none; width: 15px; height: 18px; display: grid; place-items: center; background: #f4f4f4; }
.arrow::before { content: ""; border: 4px solid transparent; border-top-color: #000; border-bottom: 0; }
.off .arrow::before { border-top-color: #999; }
.off .arrow { background: none; }

text { text-anchor: middle; }
.ball { font: bold 12px "Open Sans", sans-serif; fill: #fff; }
.ball.slab { font-family: "DejaVu Serif", serif; font-size: 11px; }
.ball.big { font-size: 24px; }
.g { font-family: "Open Sans", sans-serif; font-weight: bold; }
.sm { font-size: 11px; }
.xs { font-size: 9px; }
.cond { font-size: 12px; }
.sq { font-size: 16px; }
.num { font-size: 14px; }
.w { font-size: 13px; }
.tiny { font: 8px "DejaVu Sans", sans-serif; }
.pix { font: 8px "DejaVu Sans Mono", monospace; }
.heavy { font-weight: bold; }
.blue { fill: #0864c0; }
.green { fill: #0a7a14; }
.gray { fill: #a0a0a0; }
.violet { fill: #5a58c8; }
.brown { fill: #9a6000; }
.navy { fill: #084a94; }
.white { fill: #fff; }
.slate { fill: #4a5a9a; }

.workspace {
  flex: 1; display: grid; grid-template: minmax(520px, 1fr) 17px / minmax(0, 1fr) 17px;
  border: 2px solid #696969; border-width: 2px 2px 0 2px; border-top-color: #808080; border-right-color: #fff;
}
.canvas { position: relative; overflow: hidden; background: #c0c0c0; padding: 2px 7px; }
.canvas h2 { font: italic bold 19px/24px "Liberation Serif", "Times New Roman", serif; color: #b4b4b4; text-shadow: -1px -1px #e6e6e6, 1px 1px #6c6c6c; }
.wires { position: absolute; left: 0; top: 0; }
.node { position: absolute; width: 90px; color: #fff; }
.node svg { display: block; width: 44px; height: 42px; overflow: visible; margin-left: 19px; }
.node figcaption { margin-top: 6px; white-space: nowrap; }
.n1 { left: 358px; top: 191px; }
.n2 { left: 461px; top: 191px; }
.n3 { left: 576px; top: 191px; }
.n3 svg { margin-left: 10px; }
.n4 { left: 680px; top: 191px; }
.n4 svg { margin-left: 9px; }
.n5 { left: 774px; top: 274px; }

.vscroll { display: flex; flex-direction: column; align-items: center; width: 17px; padding: 7px 0 5px; background: linear-gradient(90deg, #e4e4e4, #f2f2f2 40%); }
.hscroll { display: flex; align-items: center; height: 17px; padding: 0 5px 0 6px; background: linear-gradient(#e4e4e4, #f2f2f2 40%); grid-column: 1 / 3; }
.tri { width: 0; height: 0; border: 4px solid transparent; flex: none; }
.up { border-top: 0; border-bottom-color: #333; }
.down { border-bottom: 0; border-top-color: #333; }
.left { border-left: 0; border-right-color: #222; }
.right { border-right: 0; border-left-color: #222; }
.hscroll .right { margin-right: 18px; }
.vthumb { width: 15px; height: 130px; margin-top: 6px; display: grid; place-items: center; border: 1px solid #949494; border-radius: 2px; background: linear-gradient(90deg, #f6f6f6, #e8e8ea 50%, #c8c8cc 55%, #dcdcde); }
.hthumb { width: 512px; height: 15px; margin-left: 8px; display: grid; place-items: center; border: 1px solid #949494; border-radius: 2px; background: linear-gradient(#f6f6f6, #e8e8ea 50%, #c8c8cc 55%, #dcdcde); }
.vthumb svg { width: 8px; height: 10px; }
.hthumb svg { width: 10px; height: 8px; }
.dim { background: #f0f0f0; }
.dim .up { border-bottom-color: #999; }
.dim .down { border-top-color: #999; }

.output { display: flex; height: 167px; padding: 7px 2px 2px 5px; border-top: 1px solid #fff; background: linear-gradient(#fbfcff, #f0f0f0 8px); border-bottom: 3px solid #d3daed; }
.dock { display: flex; flex-direction: column; gap: 1px; width: 15px; padding-top: 2px; }
.mini { width: 12px; height: 11px; border: 1px solid #777; border-color: #fff #777 #777 #fff; display: grid; place-items: center; background: #eee; }
.mini svg { width: 8px; height: 8px; }
.dock .grip { flex: 1; margin: 2px 0 0 3px; }
.pane { flex: 1; min-width: 0; display: flex; flex-direction: column; border: solid #696969; border-width: 2px 0 0 2px; }
.log { flex: 1; display: flex; justify-content: space-between; background: #fff; }
.log p { padding: 1px; }
.tabs { display: flex; align-items: stretch; height: 17px; background: linear-gradient(#000 1px, #f0f0f0 1px); }
.step { width: 18px; border: 1px solid #888; border-color: #fff #888 #888 #fff; display: grid; place-items: center; background: #f0f0f0; }
.step svg { width: 10px; height: 10px; }
.cut { width: 8px; height: 17px; flex: none; }
.tab { padding: 2px 3px 0; white-space: nowrap; }
.first { padding: 2px 5px 0 1px; }
.sel { background: #fff; }
.rest { flex: 1; border-top: 1px solid #000; border-right: 2px solid #000; }
.hbar { display: flex; width: 176px; margin-left: 2px; border-left: 2px solid #333; border-bottom: 1px solid #aaa; background: #f0f0f0; }
.nudge { width: 17px; display: grid; place-items: center; border: 1px solid #888; border-color: #fff #777 #777 #fff; }

.status { display: flex; gap: 2px; height: 21px; padding-top: 2px; border-top: 1px solid #888; font: 12px/17px Roboto, "Open Sans", sans-serif; }
.cell { border: 1px solid #a8a8a8; height: 18px; }
.ready { flex: 1; border-left: 0; padding-left: 2px; margin-right: 8px; }
.cell.sm { width: 30px; }
.num-lock { width: 34px; text-align: center; }
.end { width: 33px; }

.taskbar {
  display: flex; align-items: stretch; height: 40px; gap: 2px; padding-left: 7px; border-top: 1px solid #3a4858;
  background: linear-gradient(90deg, #8094ae 45px, #a6bedc 85px, #a6bedc calc(100% - 225px), #8094ae calc(100% - 185px));
}
.start { width: 38px; margin-right: 12px; }
.start svg { width: 38px; height: 38px; }
.task { width: 60px; display: grid; place-items: center; border: 1px solid #4c5c70; border-radius: 3px; background: linear-gradient(135deg, #d4e0ee, #a8bed8); box-shadow: inset 0 0 0 1px #e0eaf4; }
.task svg { width: 34px; height: 34px; }
.plain { background: none; border-color: transparent; box-shadow: none; }
.green-on { background: radial-gradient(#e4f4e0, #a8d4b4 60%, #88b8a0); }
.tray { display: flex; align-items: center; gap: 9px; margin-right: 18px; }
.tray svg { width: 16px; height: 18px; }
.tray svg:first-child { width: 12px; }
.clock { width: 54px; padding-top: 3px; text-align: center; color: #fff; font: 12px/17px Roboto, "Open Sans", sans-serif; white-space: nowrap; }
.peek { width: 15px; margin-left: 10px; border: 1px solid #38485c; background: linear-gradient(135deg, #8c9cb0, #54667c 50%, #7488a0); }
```
